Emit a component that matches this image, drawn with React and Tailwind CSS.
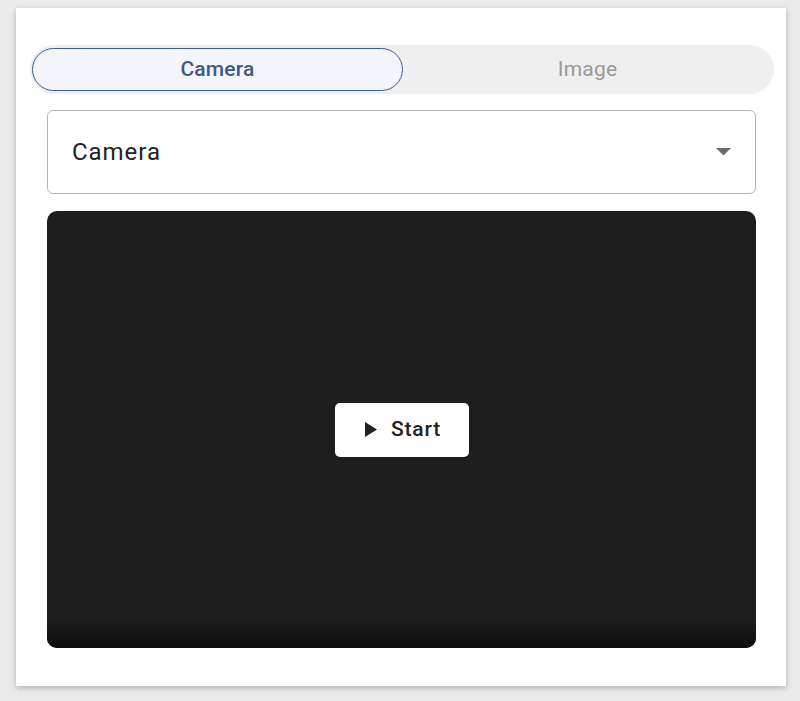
import React, { useState } from 'react';

const App = () => {
  const [tab, setTab] = useState('camera');

  return (
    <div className="min-h-[701px] w-[800px] bg-[#ebebeb] pt-2 pl-4 font-['Roboto',sans-serif]">
      {/* Card */}
      <div className="flex h-[678px] w-[770px] flex-col bg-white pl-[14px] pr-3 pt-[37px] shadow-[0_2px_6px_rgba(0,0,0,0.25)]">
        {/* Tabs */}
        <div className="flex h-[49px] w-[744px] rounded-full bg-[#efefef] px-[2px] py-[3px]">
          <button
            onClick={() => setTab('camera')}
            className={`flex flex-1 items-center justify-center rounded-full text-[21px] font-medium tracking-[0.01em] ${
              tab === 'camera'
                ? 'border-[1.5px] border-[#3e5b8c] bg-[#f3f5fa] text-[#3d5a87]'
                : 'text-[#9a9a9a]'
            }`}
          >
            Camera
          </button>
          <button
            onClick={() => setTab('image')}
            className={`flex flex-1 items-center justify-center rounded-full text-[21px] tracking-[0.01em] ${
              tab === 'image'
                ? 'border-[1.5px] border-[#3e5b8c] bg-[#f3f5fa] font-medium text-[#3d5a87]'
                : 'text-[#9a9a9a]'
            }`}
          >
            Image
          </button>
        </div>

        <div className="flex flex-col gap-[17px] pl-[17px] pr-[18px] pt-4">
          {/* Select */}
          <div className="flex h-[84px] items-center justify-between rounded-[6px] border border-[#b5b5b5] pl-6 pr-6">
            <span className="text-[24px] tracking-[0.04em] text-[#222]">Camera</span>
            <svg width="15" height="8" viewBox="0 0 15 8">
              <path d="M0 0 L15 0 L7.5 7.5 Z" fill="#6b6b6b" />
            </svg>
          </div>

          {/* Video area */}
          <div className="relative flex h-[437px] items-center justify-center overflow-hidden rounded-[10px] bg-[#1e1e1e]">
            <div className="absolute inset-x-0 bottom-0 h-[30px] bg-gradient-to-b from-[#1e1e1e] to-[#0c0c0c]" />
            <button className="relative flex h-[54px] w-[134px] items-center justify-center gap-[14px] rounded-[5px] bg-white pl-[3px] text-[21px] font-medium tracking-[0.04em] text-[#222]">
              <svg width="12" height="15" viewBox="0 0 12 15">
                <path d="M0 0 L12 7.5 L0 15 Z" fill="#222" />
              </svg>
              Start
            </button>
          </div>
        </div>
      </div>
    </div>
  );
};

export default App;
